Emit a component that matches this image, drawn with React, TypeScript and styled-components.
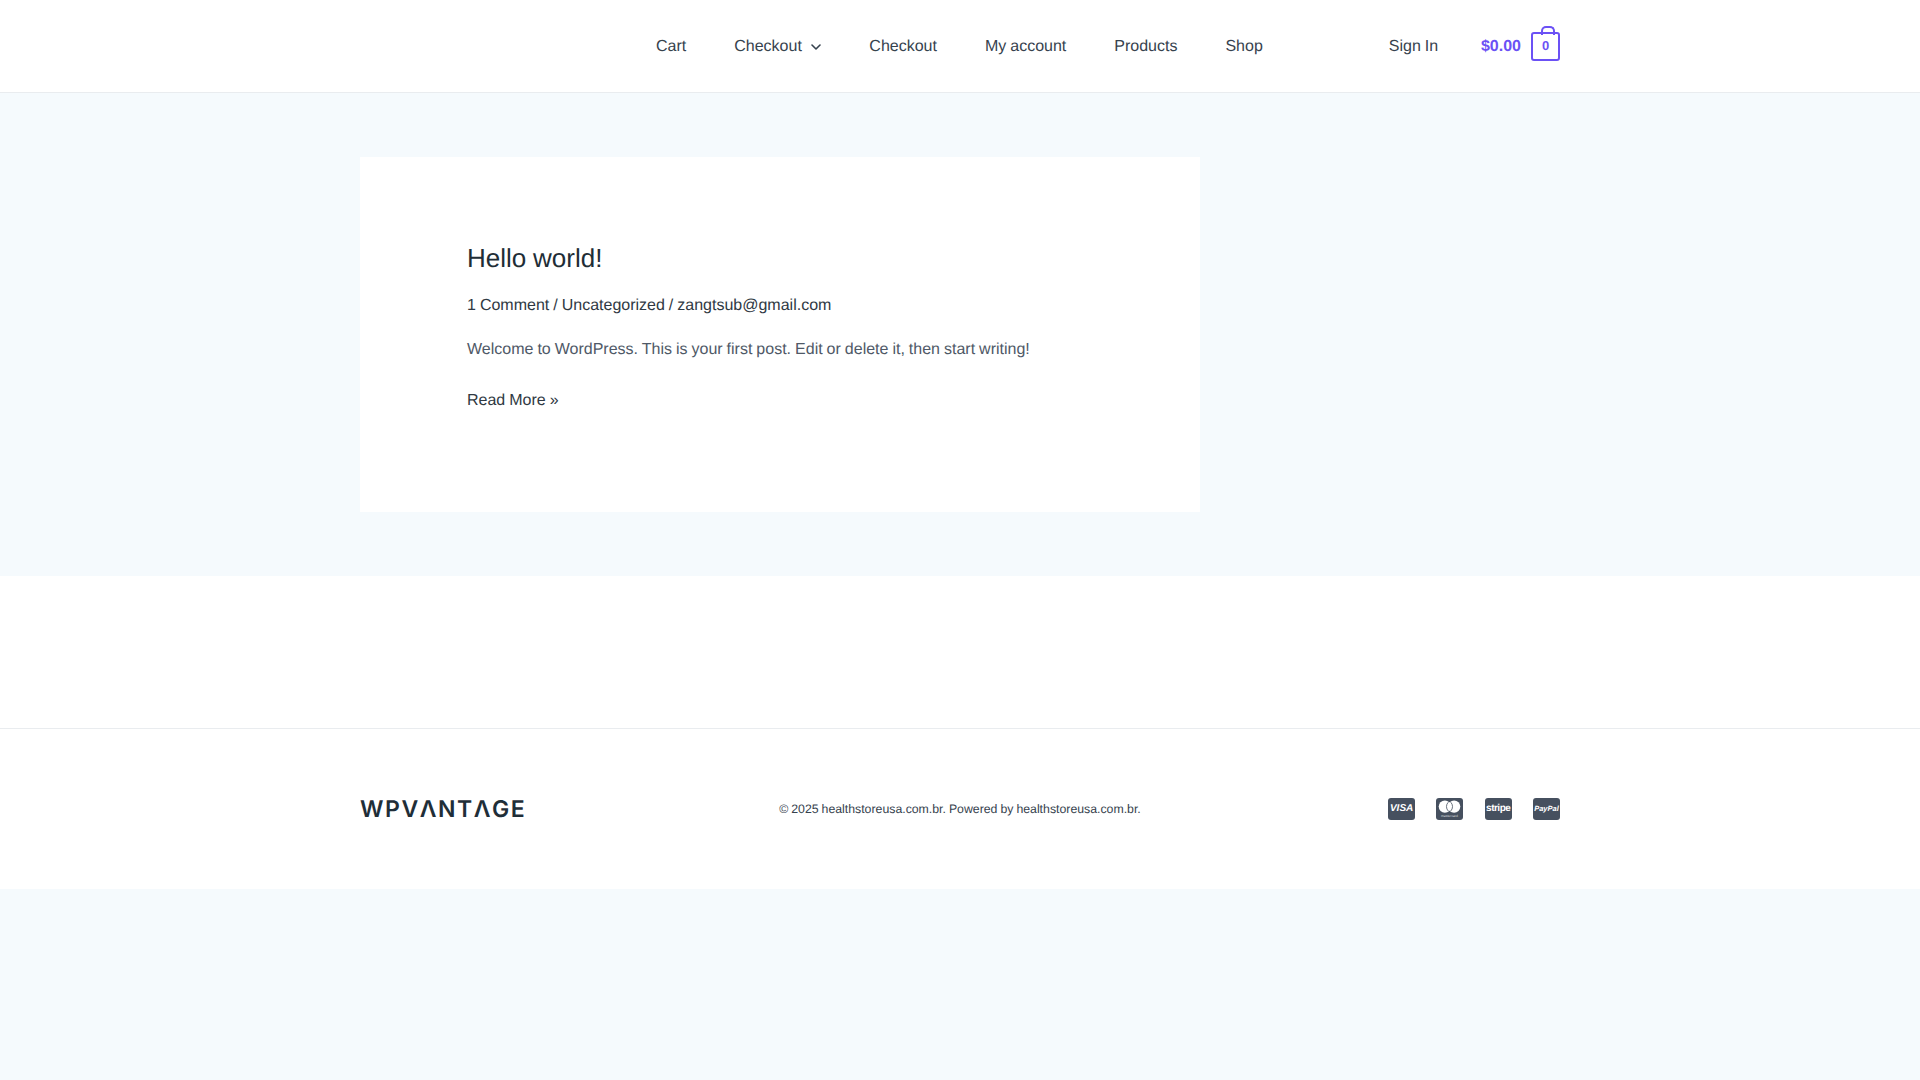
import React from "react";
import styled, { createGlobalStyle } from "styled-components";

const GlobalStyle = createGlobalStyle`
  html, body {
    margin: 0;
    padding: 0;
    background: #f5fafd;
    font-family: "Liberation Sans", Arial, sans-serif;
    font-size: 16px;
    color: #2b343d;
    text-rendering: geometricPrecision;
    word-spacing: -0.45px;
  }
  * {
    box-sizing: border-box;
  }
  a {
    color: inherit;
    text-decoration: none;
  }
`;

const Page = styled.div`
  min-height: 1080px;
  display: flex;
  flex-direction: column;
  background: #f5fafd;
`;

const Header = styled.header`
  height: 93px;
  background: #fff;
  border-bottom: 1px solid #e9ecef;
`;

const Container = styled.div`
  width: 1200px;
  margin: 0 auto;
  display: flex;
  align-items: center;
  height: 100%;
`;

const Nav = styled.nav`
  margin-left: 296px;
  padding-top: 1px;
  display: flex;
  align-items: center;
  gap: 48px;
`;

const NavLink = styled.a`
  display: flex;
  align-items: center;
  gap: 9.5px;
  color: #36424e;
  line-height: 24px;
`;

const Chevron = styled.svg`
  width: 10px;
  height: 10px;
  margin-top: 1px;
  fill: none;
  stroke: currentColor;
  stroke-width: 1.6;
  stroke-linecap: round;
  stroke-linejoin: round;
`;

const SignIn = styled.a`
  margin-left: 126px;
  padding-top: 1px;
  color: #36424e;
  line-height: 24px;
`;

const Cart = styled.a`
  margin-left: auto;
  display: flex;
  align-items: center;
  gap: 10px;
  color: #6b51f5;
  font-weight: 700;
`;

const Price = styled.span`
  padding-top: 2px;
`;

const Bag = styled.span`
  position: relative;
  width: 29px;
  height: 29px;
  margin-top: 1px;
  border: 2px solid #6b51f5;
  border-radius: 3px;
  display: flex;
  align-items: center;
  justify-content: center;
  padding-bottom: 2px;
  font-size: 13px;
  line-height: 1;

  &::before {
    content: "";
    position: absolute;
    top: -8px;
    left: 50%;
    width: 10px;
    height: 7px;
    margin-left: -5px;
    border: 2px solid #6b51f5;
    border-bottom: none;
    border-radius: 5px 5px 0 0;
  }
`;

const Main = styled.main`
  height: 483px;
  padding-top: 64px;
`;

const Card = styled.article`
  margin-left: 360px;
  width: 840px;
  height: 355px;
  background: #fff;
  padding: 85px 107px 0;
`;

const Title = styled.h2`
  margin: 0;
  font-size: 26px;
  font-weight: 400;
  line-height: 32px;
  color: #212d36;
`;

const Meta = styled.div`
  margin-top: 20px;
  line-height: 24px;
  color: #2f3943;
`;

const Excerpt = styled.p`
  margin: 20px 0 0;
  line-height: 24px;
  color: #4f5967;
`;

const ReadMore = styled.a`
  display: block;
  margin-top: 27px;
  line-height: 24px;
  color: #2f3943;
`;

const Spacer = styled.div`
  height: 153px;
  background: #fff;
  border-bottom: 1px solid #e9ecef;
`;

const Footer = styled.footer`
  height: 160px;
  background: #fff;
`;

const FooterRow = styled(Container)`
  display: grid;
  grid-template-columns: 1fr auto 1fr;
`;

const Logo = styled.a`
  font-family: Inter, "Liberation Sans", sans-serif;
  font-size: 23px;
  font-weight: 600;
  letter-spacing: 1.55px;
  line-height: 1;
  color: #1f2e38;
`;

const Copyright = styled.div`
  font-size: 12.3px;
  color: #36424e;
  white-space: nowrap;
`;

const Payments = styled.div`
  display: flex;
  justify-content: flex-end;
  gap: 21.3px;
`;

const PayBadge = styled.span<{ $italic?: boolean; $size: number; $squeeze?: boolean }>`
  width: 27px;
  height: 22px;
  border-radius: 3px;
  background: #46505f;
  color: #fff;
  display: flex;
  align-items: center;
  justify-content: center;
  font-size: ${(p) => p.$size}px;
  font-weight: 700;
  font-style: ${(p) => (p.$italic ? "italic" : "normal")};
  letter-spacing: ${(p) => (p.$squeeze ? "-0.5px" : "0")};
  line-height: 1;
  overflow: hidden;
`;

const MasterMark = styled.svg`
  width: 27px;
  height: 22px;
  display: block;
`;

export default function App() {
  return (
    <Page>
      <GlobalStyle />
      <Header>
        <Container>
          <Nav>
            <NavLink href="#">Cart</NavLink>
            <NavLink href="#">
              Checkout
              <Chevron viewBox="0 0 10 10">
                <path d="M1 3l4 4 4-4" />
              </Chevron>
            </NavLink>
            <NavLink href="#">Checkout</NavLink>
            <NavLink href="#">My account</NavLink>
            <NavLink href="#">Products</NavLink>
            <NavLink href="#">Shop</NavLink>
          </Nav>
          <SignIn href="#">Sign In</SignIn>
          <Cart href="#">
            <Price>$0.00</Price>
            <Bag>0</Bag>
          </Cart>
        </Container>
      </Header>
      <Main>
        <Card>
          <Title>Hello world!</Title>
          <Meta>1 Comment / Uncategorized / zangtsub@gmail.com</Meta>
          <Excerpt>
            Welcome to WordPress. This is your first post. Edit or delete it, then start writing!
          </Excerpt>
          <ReadMore href="#">Read More »</ReadMore>
        </Card>
      </Main>
      <Spacer />
      <Footer>
        <FooterRow>
          <Logo href="#">WPVΛNTΛGE</Logo>
          <Copyright>© 2025 healthstoreusa.com.br. Powered by healthstoreusa.com.br.</Copyright>
          <Payments>
            <PayBadge $italic $size={10}>VISA</PayBadge>
            <MasterMark viewBox="0 0 27 22">
              <rect width="27" height="22" rx="3" fill="#46505f" />
              <circle cx="8.9" cy="8.6" r="6.2" fill="#fff" />
              <circle cx="18.1" cy="8.6" r="6.2" fill="#fff" />
              <path d="M12.3 4.2a6.2 6.2 0 0 0 0 8.8M14.7 4.2a6.2 6.2 0 0 1 0 8.8" fill="none" stroke="#46505f" strokeWidth="0.8" />
              <text x="13.5" y="19" fontSize="3.4" fill="#d5d9de" textAnchor="middle">mastercard</text>
            </MasterMark>
            <PayBadge $size={10} $squeeze>stripe</PayBadge>
            <PayBadge $italic $size={7.5}>PayPal</PayBadge>
          </Payments>
        </FooterRow>
      </Footer>
    </Page>
  );
}
